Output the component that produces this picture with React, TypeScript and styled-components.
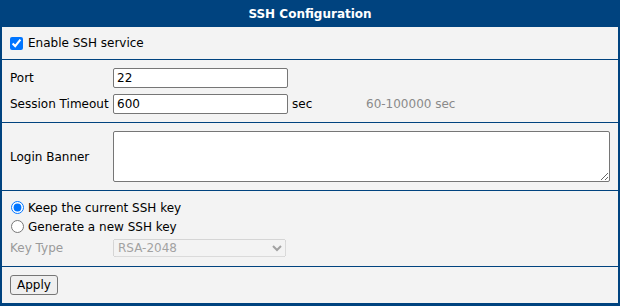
import React from "react";
import styled, { createGlobalStyle } from "styled-components";

const BLUE = "#00437f";

const Global = createGlobalStyle`
  html, body { margin: 0; padding: 0; background: #ffffff; }
  body { font-family: "DejaVu Sans", Verdana, sans-serif; font-size: 12px; color: #000; }
`;

const Panel = styled.div`
  width: 620px;
  height: 306px;
  display: flex;
  flex-direction: column;
  box-sizing: border-box;
`;

const Header = styled.div`
  height: 27px;
  flex: none;
  background: ${BLUE};
  color: #fff;
  font-weight: bold;
  font-size: 12px;
  display: flex;
  align-items: center;
  justify-content: center;
`;

const Body = styled.div`
  flex: 1;
  background: #f3f3f3;
  border-left: 2px solid ${BLUE};
  border-right: 2px solid ${BLUE};
  border-bottom: 3px solid ${BLUE};
  display: flex;
  flex-direction: column;
`;

const Section = styled.div<{ $h: number; $pt?: number; $first?: boolean }>`
  height: ${(p) => p.$h}px;
  box-sizing: border-box;
  border-top: ${(p) => (p.$first ? "none" : `1px solid ${BLUE}`)};
  padding: ${(p) => p.$pt ?? 0}px 8px 0 8px;
  display: flex;
  flex-direction: column;
  justify-content: ${(p) => (p.$pt === undefined ? "center" : "flex-start")};
`;

const CheckRow = styled.label<{ $gap?: number }>`
  display: flex;
  align-items: center;
  gap: ${(p) => p.$gap ?? 5}px;
  height: 19px;
  cursor: default;
`;

const Check = styled.input<{ $ml?: number }>`
  margin: 0 0 0 ${(p) => p.$ml ?? 0}px;
  width: 13px;
  height: 13px;
`;

const Grid = styled.div<{ $gap: number }>`
  display: grid;
  grid-template-columns: 103px 175px 78px auto;
  justify-content: start;
  row-gap: ${(p) => p.$gap}px;
  align-items: center;
  justify-items: start;
`;

const Label = styled.span<{ $muted?: boolean }>`
  color: ${(p) => (p.$muted ? "#9a9a9a" : "#000")};
  white-space: nowrap;
`;

const Field = styled.input`
  box-sizing: border-box;
  width: 175px;
  height: 20px;
  margin: 0;
  padding: 0 3px;
  border: 1px solid #767676;
  border-radius: 2px;
  background: #fff;
  font-family: "DejaVu Sans", Verdana, sans-serif;
  font-size: 12px;
  color: #000;
`;

const Unit = styled.span`
  padding-left: 4px;
`;

const Hint = styled.span`
  color: #8a8a8a;
`;

const BannerRow = styled.div`
  display: flex;
  align-items: center;
`;

const BannerLabel = styled.span`
  width: 103px;
  flex: none;
`;

const Area = styled.textarea`
  box-sizing: border-box;
  width: 497px;
  height: 51px;
  margin: 0;
  border: 1px solid #767676;
  border-radius: 2px;
  background: #fff;
  font-family: "DejaVu Sans", Verdana, sans-serif;
  font-size: 12px;
`;

const KeyRow = styled.div`
  display: flex;
  align-items: center;
  height: 18px;
  margin-top: 3px;
`;

const Select = styled.select`
  box-sizing: border-box;
  width: 173px;
  height: 18px;
  margin: 0;
  font-family: "DejaVu Sans", Verdana, sans-serif;
  font-size: 12px;
`;

const Button = styled.button`
  box-sizing: border-box;
  width: 48px;
  height: 20px;
  margin: 0;
  padding: 0;
  border: 1px solid #767676;
  border-radius: 3px;
  background: #efefef;
  font-family: "DejaVu Sans", Verdana, sans-serif;
  font-size: 12px;
  color: #000;
`;

export default function App() {
  return (
    <>
      <Global />
      <Panel>
        <Header>SSH Configuration</Header>
        <Body>
          <Section $h={32} $first>
            <CheckRow>
              <Check type="checkbox" defaultChecked />
              Enable SSH service
            </CheckRow>
          </Section>
          <Section $h={63} $pt={8}>
            <Grid $gap={6}>
              <Label>Port</Label>
              <Field defaultValue="22" />
              <span />
              <span />
              <Label>Session Timeout</Label>
              <Field defaultValue="600" />
              <Unit>sec</Unit>
              <Hint>60-100000 sec</Hint>
            </Grid>
          </Section>
          <Section $h={68} $pt={8}>
            <BannerRow>
              <BannerLabel>Login Banner</BannerLabel>
              <Area />
            </BannerRow>
          </Section>
          <Section $h={76} $pt={7}>
            <CheckRow $gap={4}>
              <Check type="radio" name="key" defaultChecked $ml={1} />
              Keep the current SSH key
            </CheckRow>
            <CheckRow $gap={4}>
              <Check type="radio" name="key" $ml={1} />
              Generate a new SSH key
            </CheckRow>
            <KeyRow>
              <BannerLabel>
                <Label $muted>Key Type</Label>
              </BannerLabel>
              <Select disabled defaultValue="RSA-2048">
                <option>RSA-2048</option>
              </Select>
            </KeyRow>
          </Section>
          <Section $h={37} $pt={8}>
            <div>
              <Button>Apply</Button>
            </div>
          </Section>
        </Body>
      </Panel>
    </>
  );
}
